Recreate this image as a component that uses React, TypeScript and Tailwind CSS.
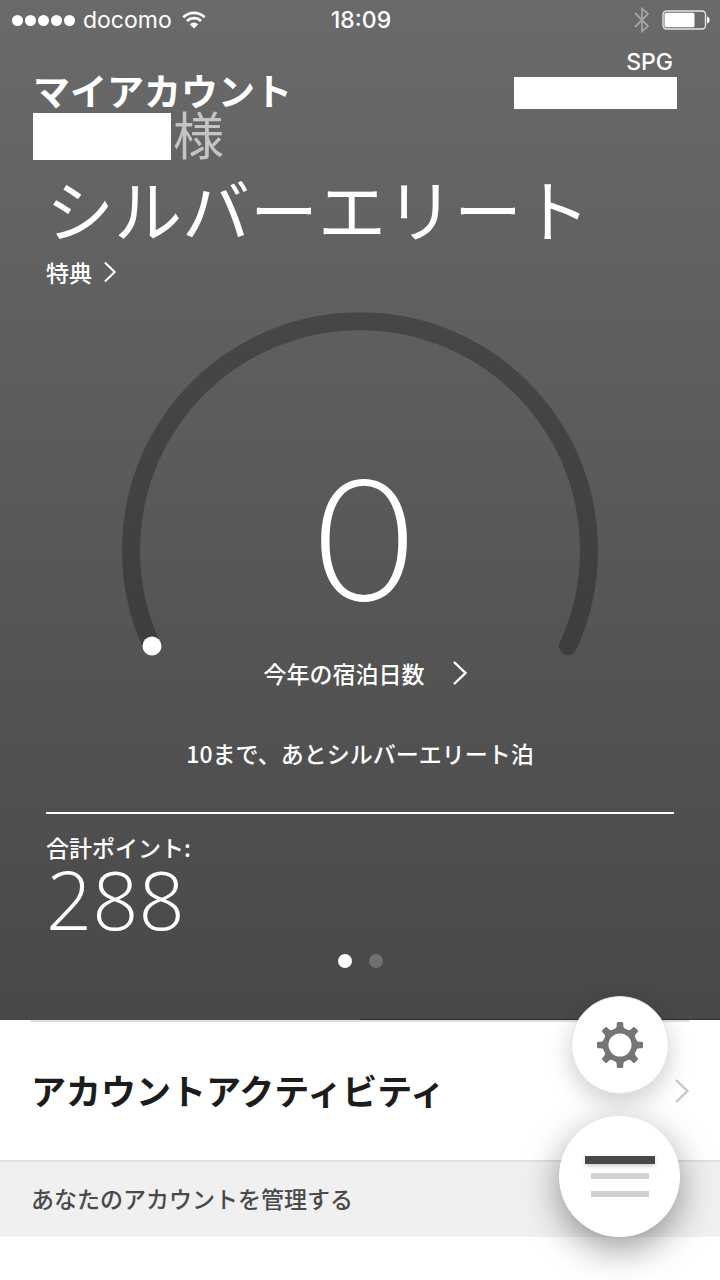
import type { ReactNode } from "react";
import clsx from "clsx";

const signalDots = [0, 1, 2, 3, 4];

const pages = [
    { label: "ページ 1", active: true },
    { label: "ページ 2", active: false }
];

const gearTeeth = [0, 45, 90, 135, 180, 225, 270, 315];

function StatusBar() {
    return (
        <div className="grid h-10 grid-cols-[1fr_auto_1fr] items-center pr-2.5 pl-3 font-['Inter',sans-serif] text-[23px] leading-none">
            <div className="flex items-center">
                <div className="flex gap-0.5">
                    {signalDots.map((dot) => (
                        <span key={dot} className="size-[11px] rounded-full bg-white" />
                    ))}
                </div>
                <span className="ml-2">docomo</span>
                <svg className="ml-2.5 h-[18px] w-6" viewBox="0 0 24 18" fill="none" aria-hidden="true">
                    <path d="M1.3 6.2A15.4 15.4 0 0 1 22.7 6.2" stroke="white" strokeWidth="2.6" />
                    <path d="M5 10A10 10 0 0 1 19 10" stroke="white" strokeWidth="2.6" />
                    <path d="M12 17.5L7.8 13.3A6 6 0 0 1 16.2 13.3Z" fill="white" />
                </svg>
            </div>
            <span className="font-medium">18:09</span>
            <div className="flex items-center justify-end gap-3">
                <svg className="h-[26px] w-4" viewBox="0 0 16 26" fill="none" aria-hidden="true">
                    <path d="M1 6L14 19L8 24.5V1.5L14 7L1 20" stroke="#a3a3a3" strokeWidth="1.8" />
                </svg>
                <svg className="h-5 w-12" viewBox="0 0 48 20" fill="none" aria-hidden="true">
                    <rect x="1" y="1" width="42.5" height="18" rx="3.5" stroke="#e5e5e5" strokeWidth="1.4" />
                    <rect x="2.5" y="2.8" width="30" height="14.4" rx="1.5" fill="white" />
                    <path d="M45 6.5C48.4 7.2 48.4 12.8 45 13.5Z" fill="white" />
                </svg>
            </div>
        </div>
    );
}

function Chevron({ className }: { className: string }) {
    return (
        <svg className={className} viewBox="0 0 14 24" fill="none" aria-hidden="true">
            <path d="M1 1L12.5 12L1 23" stroke="currentColor" strokeWidth="2.4" />
        </svg>
    );
}

function Gauge({ children }: { children: ReactNode }) {
    return (
        <div className="mx-auto mt-6 grid w-full max-w-[476px]">
            <svg className="col-start-1 row-start-1 w-full" viewBox="0 0 476 344" fill="none" aria-hidden="true">
                <path
                    d="M30 334A229 229 0 1 1 446 334"
                    stroke="#000000"
                    strokeOpacity="0.26"
                    strokeWidth="18"
                    strokeLinecap="round"
                />
                <circle cx="30" cy="334" r="9.5" fill="white" />
            </svg>
            <div className="col-start-1 row-start-1 flex items-end justify-center">{children}</div>
        </div>
    );
}

function Gear() {
    return (
        <svg className="size-[46px]" viewBox="-23 -23 46 46" aria-hidden="true">
            <circle r="14.3" fill="none" stroke="#757575" strokeWidth="5.6" />
            {gearTeeth.map((angle) => (
                <path
                    key={angle}
                    d="M-5.5 -15.8Q-3.3 -17 -3.3 -19V-21.5Q-3.3 -23 -1.8 -23H1.8Q3.3 -23 3.3 -21.5V-19Q3.3 -17 5.5 -15.8Z"
                    fill="#757575"
                    transform={`rotate(${angle})`}
                />
            ))}
        </svg>
    );
}

export default function App() {
    return (
        <div className="relative min-h-screen overflow-hidden bg-white font-['Noto_Sans_CJK_JP',sans-serif] text-white">
            <section className="bg-linear-to-b from-[#6a6a6a] to-[#484848]">
                <StatusBar />

                <header className="flex items-start justify-between pt-2.5 pr-[43px] pl-[33px]">
                    <div className="mt-6">
                        <h1 className="pb-[7px] text-[37px] leading-8 font-bold">マイアカウント</h1>
                        <div className="flex">
                            <div className="h-[47px] w-[138px] bg-white" />
                            <span className="ml-0.5 text-[51px] leading-10 text-[#c4c4c4]">様</span>
                        </div>
                    </div>
                    <div className="text-right">
                        <p className="pr-1 font-['Inter','Liberation_Sans',sans-serif] text-[23px] leading-6 font-medium">
                            SPG
                        </p>
                        <div className="mt-[3px] h-8 w-[163px] bg-white" />
                    </div>
                </header>

                <h2 className="mt-2 pl-[46px] text-[68px] leading-[80px] font-normal">シルバーエリート</h2>

                <div className="mt-2 px-[46px]">
                    <a href="#benefits" className="inline-flex items-center gap-3 text-[23px] leading-8 font-medium">
                        特典
                        <Chevron className="h-[22px] w-3" />
                    </a>
                </div>

                <Gauge>
                    <span className="pb-[38px] pl-2 font-['Lato',sans-serif] text-[169px] leading-[164px] font-light">
                        0
                    </span>
                </Gauge>

                <div className="mt-px flex justify-center pl-2.5">
                    <a href="#nights" className="flex items-center gap-7 text-[23px] leading-8 font-medium">
                        今年の宿泊日数
                        <Chevron className="h-6 w-3.5" />
                    </a>
                </div>

                <p className="mt-12 text-center text-[23px] leading-8 font-medium">
                    10まで、あとシルバーエリート泊
                </p>

                <div className="mx-[46px] mt-[43px] border-t-2 border-white pt-[17px]">
                    <p className="text-[23px] leading-8 font-medium">合計ポイント:</p>
                    <p className="font-['Open_Sans',sans-serif] text-[81px] leading-[72px] font-light">288</p>
                </div>

                <div className="mt-[19px] flex justify-center gap-[17px]">
                    {pages.map((page) => (
                        <button
                            key={page.label}
                            type="button"
                            aria-label={page.label}
                            className={clsx("size-3.5 rounded-full", page.active ? "bg-white" : "bg-[#707070]")}
                        />
                    ))}
                </div>

                <div className="mt-[51px] ml-auto h-px w-1/2 bg-[#2f2a45]" />
            </section>

            <a href="#activity" className="block px-[31px] text-[#1c1c1c]">
                <div className="flex h-[140px] items-center justify-between border-t-2 border-[#dedee0]">
                    <span className="pb-0.5 text-[35px] leading-10 font-bold">アカウントアクティビティ</span>
                    <Chevron className="h-6 w-3.5 text-[#c7c7cc]" />
                </div>
            </a>

            <h3 className="border-t-2 border-[#e0e0e0] bg-[#f0f0f0] px-[31px] pt-5 pb-[23px] text-[23px] leading-8 font-medium text-[#4a4a4a]">
                あなたのアカウントを管理する
            </h3>

            {/* Floating actions */}
            <div className="absolute right-10 bottom-[43px] flex flex-col items-center gap-[22px]">
                <button
                    type="button"
                    aria-label="設定"
                    className="flex size-[98px] items-center justify-center rounded-full border border-[#e6e6e6] bg-white shadow-[0_8px_24px_rgba(0,0,0,0.2)]"
                >
                    <Gear />
                </button>
                <button
                    type="button"
                    aria-label="メニュー"
                    className="flex size-[121px] flex-col items-center justify-center rounded-full bg-white shadow-[0_12px_36px_rgba(0,0,0,0.4)]"
                >
                    <span className="h-2 w-[70px] bg-[#484848] shadow-[0_2px_4px_rgba(0,0,0,0.2)]" />
                    <span className="mt-[9px] h-1.5 w-[58px] bg-[#d2d2d2]" />
                    <span className="mt-3 h-1.5 w-[58px] bg-[#d2d2d2]" />
                </button>
            </div>
        </div>
    );
}
